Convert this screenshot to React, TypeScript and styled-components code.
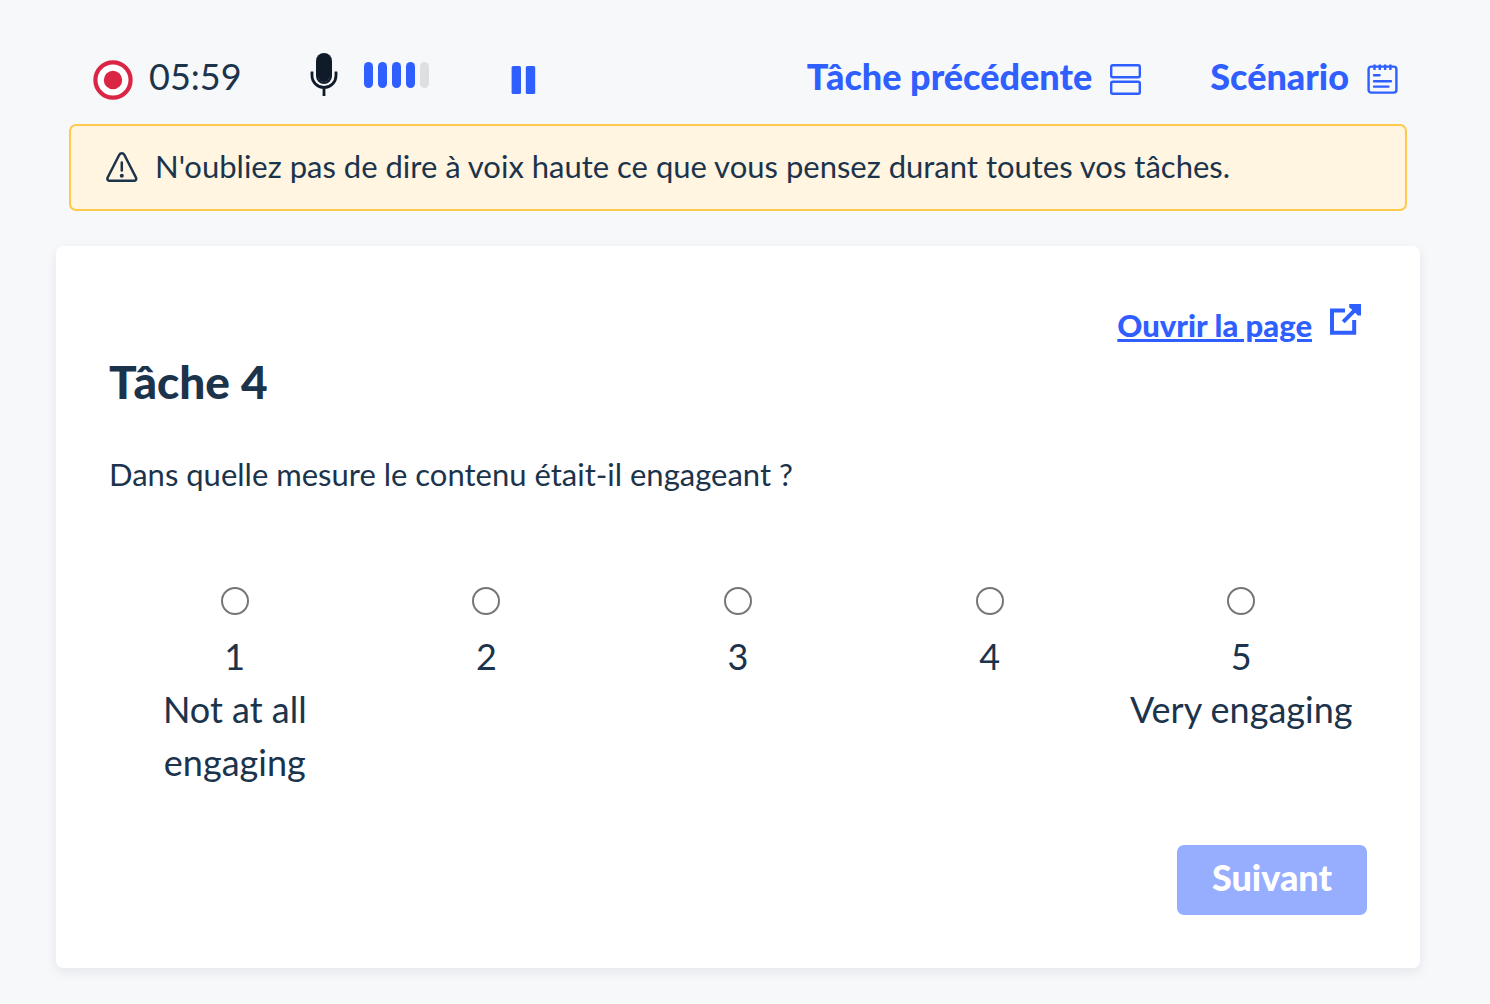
import React, { useState } from "react";
import styled, { createGlobalStyle } from "styled-components";

const color = {
  page: "#f7f8fa",
  ink: "#1b344c",
  blue: "#305fff",
  red: "#da2544",
  muted: "#dedfe3",
};

const GlobalStyle = createGlobalStyle`
  * { box-sizing: border-box; }
  body {
    margin: 0;
    background: ${color.page};
    color: ${color.ink};
    font-family: Lato, "Liberation Sans", sans-serif;
  }
`;

const Page = styled.main`
  min-height: 100vh;
  padding: 50px 70px 36px 56px;
`;

const Toolbar = styled.header`
  display: flex;
  align-items: center;
  height: 52px;
  margin: 0 22px 22px 37px;
`;

const Recorder = styled.div`
  display: flex;
  align-items: center;
  gap: 16px;
  min-width: 217px;
  svg { margin-top: 7px; }
`;

const Timer = styled.time`
  font-size: 36px;
  line-height: 52px;
`;

const Level = styled.div`
  display: flex;
  align-items: center;
  gap: 26px;
  height: 46px;
  margin: 0 81px 2px 0;
`;

const Bars = styled.div`
  display: flex;
  gap: 5px;
`;

const Bar = styled.span<{ $on: boolean }>`
  width: 9px;
  height: 26px;
  border-radius: 5px;
  background: ${(p) => (p.$on ? color.blue : color.muted)};
`;

const PlainButton = styled.button`
  display: flex;
  align-items: center;
  padding: 0;
  border: 0;
  background: none;
  color: ${color.blue};
  font: inherit;
  cursor: pointer;
  svg { margin-top: 7px; }
`;

const Actions = styled.nav`
  display: flex;
  gap: 69px;
  margin-left: auto;
`;

const Action = styled(PlainButton)`
  gap: 18px;
  font-size: 36px;
  font-weight: 900;
  line-height: 52px;
`;

const Notice = styled.aside`
  display: flex;
  align-items: center;
  gap: 17px;
  margin: 0 13px 35px;
  padding: 18px 35px 20px;
  border: 2px solid #ffc94d;
  border-radius: 7px;
  background: #fff5e0;
  font-size: 31px;
  line-height: 45px;
  svg { flex: none; }
`;

const Card = styled.form`
  padding: 53px;
  border-radius: 7px;
  background: #fff;
  box-shadow: 0 4px 12px rgba(20, 30, 50, 0.08);
`;

const LinkRow = styled.div`
  display: flex;
  justify-content: flex-end;
  padding-right: 6px;
`;

const PageLink = styled.a`
  display: flex;
  align-items: flex-start;
  gap: 18px;
  color: ${color.blue};
  font-size: 31px;
  font-weight: 900;
  line-height: 52px;
  text-decoration: none;
  svg { margin-top: 5px; }
`;

const LinkText = styled.span`
  text-decoration: underline;
  text-decoration-thickness: 3px;
  text-underline-offset: 2px;
`;

const Title = styled.h1`
  margin: 0;
  font-size: 46px;
  font-weight: 900;
  line-height: 62px;
`;

const Scale = styled.fieldset`
  min-width: 0;
  margin: 0;
  padding: 0;
  border: 0;
`;

const Question = styled.legend`
  padding: 39px 0 90px;
  font-size: 31px;
  line-height: 45px;
`;

const Options = styled.div`
  display: grid;
  grid-template-columns: repeat(5, 1fr);
`;

const Option = styled.label`
  display: flex;
  flex-direction: column;
  align-items: center;
  font-size: 36px;
  line-height: 53px;
  text-align: center;
`;

const Radio = styled.input`
  appearance: none;
  width: 28px;
  height: 28px;
  margin: 0 0 15px;
  border: 2px solid #767676;
  border-radius: 50%;
  background: #fff;
  &:checked {
    border-color: ${color.blue};
    background: radial-gradient(${color.blue} 45%, #fff 50%);
  }
`;

const Footer = styled.div`
  display: flex;
  justify-content: flex-end;
  margin-top: 56px;
`;

const Submit = styled.button`
  min-width: 190px;
  padding: 6px 34px 12px;
  border: 0;
  border-radius: 7px;
  background: ${color.blue};
  color: #fff;
  font: inherit;
  font-size: 36px;
  font-weight: 900;
  line-height: 52px;
  &:disabled { background: #97aeff; }
`;

const RecordIcon = () => (
  <svg width="40" height="40" viewBox="0 0 40 40" aria-hidden="true">
    <circle cx="20" cy="20" r="17.6" fill="#fff" stroke={color.red} strokeWidth="4.2" />
    <circle cx="20" cy="20" r="9.2" fill={color.red} />
  </svg>
);

const MicIcon = () => (
  <svg width="28" height="44" viewBox="0 0 28 44" fill="none" aria-hidden="true">
    <rect x="6" y="0" width="16" height="31" rx="8" fill="#0f1b29" />
    <path d="M2 18.5v4a12 12 0 0 0 24 0v-4M14 34.5V43" stroke="#0f1b29" strokeWidth="2.8" />
    <path d="M8.5 24.5a5.6 5.6 0 0 0 11 0" stroke="#465260" strokeWidth="0.6" strokeDasharray="3 1" />
  </svg>
);

const PauseIcon = () => (
  <svg width="26" height="28" viewBox="0 0 26 28" fill="currentColor" aria-hidden="true">
    <rect x="1.6" width="9.4" height="28" rx="1.5" />
    <rect x="15.8" width="9.4" height="28" rx="1.5" />
  </svg>
);

const SplitIcon = () => (
  <svg width="31" height="31" viewBox="0 0 31 31" fill="none" stroke="currentColor" strokeWidth="2.4" aria-hidden="true">
    <rect x="1.2" y="1.2" width="28.6" height="12" rx="1.5" />
    <rect x="1.2" y="17.8" width="28.6" height="12" rx="1.5" />
  </svg>
);

const NotesIcon = () => (
  <svg width="31" height="31" viewBox="0 0 31 31" fill="none" stroke="currentColor" strokeWidth="2.4" aria-hidden="true">
    <rect x="1.6" y="2.6" width="27.8" height="26" rx="2.6" />
    <path d="M7.5 0.5v5.6M12.8 0.5v5.6M18.1 0.5v5.6M23.4 0.5v5.6" strokeWidth="2.4" />
    <path d="M7 11.2h5.6M7 17.2h17M7 22.6h14.5" strokeLinecap="round" />
  </svg>
);

const WarningIcon = () => (
  <svg width="32" height="31" viewBox="0 0 32 31" fill="none" stroke="currentColor" strokeWidth="2.5" strokeLinecap="round" aria-hidden="true">
    <path d="M13.3 3.8 1.8 26.3C.8 28.3 1.7 29.8 3.8 29.8h24c2.1 0 3-1.5 2-3.5L18.3 3.8c-1.1-2.1-3.9-2.1-5 0Z" />
    <path d="M15.8 11.6v8" />
    <circle cx="15.8" cy="24.7" r="2" fill="currentColor" stroke="none" />
  </svg>
);

const ExternalIcon = () => (
  <svg width="31" height="31" viewBox="0 0 31 31" fill="none" stroke="currentColor" strokeWidth="4" aria-hidden="true">
    <path d="M15 6.4H2v22.4h22.2V16" />
    <path d="M13.2 17.8 27 4" />
    <path d="M19.2 0H31v11.6h-3.2L25.5 9 22 5.5l-2.8-2Z" fill="currentColor" stroke="none" />
  </svg>
);

const choices = [
  { value: 1, caption: "Not at all engaging" },
  { value: 2 },
  { value: 3 },
  { value: 4 },
  { value: 5, caption: "Very engaging" },
];

export default function App() {
  const [answer, setAnswer] = useState<number | null>(null);

  return (
    <>
      <GlobalStyle />
      <Page>
        <Toolbar>
          <Recorder>
            <RecordIcon />
            <Timer>05:59</Timer>
          </Recorder>
          <Level>
            <MicIcon />
            <Bars>
              {[1, 2, 3, 4, 5].map((n) => (
                <Bar key={n} $on={n < 5} />
              ))}
            </Bars>
          </Level>
          <PlainButton type="button" aria-label="Pause">
            <PauseIcon />
          </PlainButton>
          <Actions>
            <Action type="button">
              Tâche précédente
              <SplitIcon />
            </Action>
            <Action type="button">
              Scénario
              <NotesIcon />
            </Action>
          </Actions>
        </Toolbar>

        <Notice>
          <WarningIcon />
          <span>N'oubliez pas de dire à voix haute ce que vous pensez durant toutes vos tâches.</span>
        </Notice>

        <Card onSubmit={(e) => e.preventDefault()}>
          <LinkRow>
            <PageLink href="#page">
              <LinkText>Ouvrir la page</LinkText>
              <ExternalIcon />
            </PageLink>
          </LinkRow>
          <Title>Tâche 4</Title>
          <Scale>
            <Question>Dans quelle mesure le contenu était-il engageant ?</Question>
            <Options>
              {choices.map(({ value, caption }) => (
                <Option key={value}>
                  <Radio
                    type="radio"
                    name="engagement"
                    value={value}
                    checked={answer === value}
                    onChange={() => setAnswer(value)}
                  />
                  <span>{value}</span>
                  {caption && <span>{caption}</span>}
                </Option>
              ))}
            </Options>
          </Scale>
          <Footer>
            <Submit type="submit" disabled={answer === null}>
              Suivant
            </Submit>
          </Footer>
        </Card>
      </Page>
    </>
  );
}
